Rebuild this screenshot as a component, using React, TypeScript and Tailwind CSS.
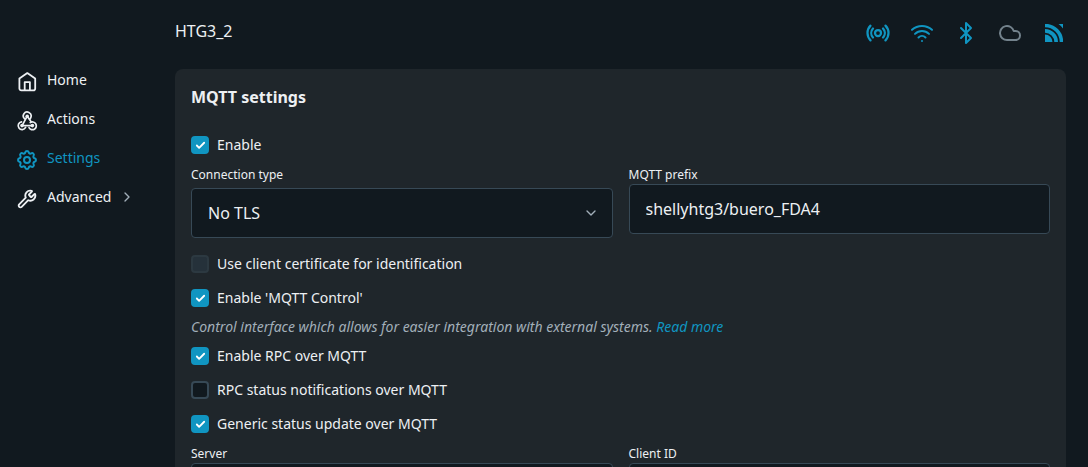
import type { ReactNode } from "react";
import { Bluetooth, Check, ChevronDown, ChevronRight, Cloud, Wifi, Wrench } from "lucide-react";
import { PiBroadcastBold } from "react-icons/pi";
import { TbSettings } from "react-icons/tb";

function HomeIcon() {
  return (
    <svg viewBox="0 0 20 20" className="size-5 shrink-0" fill="none" stroke="currentColor" strokeWidth="1.8" strokeLinejoin="round" strokeLinecap="round" aria-hidden="true">
      <path d="M2.400 6.600 10.300 1.100l7.900 5.500v9.800a1.900 1.900 0 0 1-1.900 1.900H4.300a1.900 1.900 0 0 1-1.900-1.900Z" />
      <path d="M7.700 18v-7.900h5.200V18" />
    </svg>
  );
}

function WebhookIcon() {
  return (
    <svg viewBox="0 0 22 22" className="size-[22px] shrink-0" fill="none" stroke="currentColor" strokeWidth="1.7" strokeLinejoin="round" strokeLinecap="round" aria-hidden="true">
      <path d="M11.200 6.200 6.400 15.100" />
      <path d="M6.100 15.600H16.400" />
      <path d="M11.200 6.200 15.300 12" />
      <path d="M8.700 8.900A3.900 3.900 0 1 1 14.900 7.200C14.700 8 14.300 8.700 13.800 9.200" />
      <path d="M5.500 11.800A3.900 3.900 0 1 0 9.600 17.400" />
      <path d="M14.200 12.600A3.900 3.900 0 1 1 13 17.700" />
      <g fill="currentColor" stroke="none">
        <circle cx="11.200" cy="6.200" r="1.800" />
        <circle cx="6" cy="15.600" r="1.800" />
        <circle cx="16.400" cy="15.600" r="1.800" />
      </g>
    </svg>
  );
}

function RssIcon() {
  return (
    <svg viewBox="0 0 18 18" className="size-[18px]" fill="currentColor" role="img" aria-label="Connection">
      <path d="M0 10.500A7.500 7.500 0 0 1 7.500 18H0Z" />
      <path d="M0 5A13 13 0 0 1 13 18H9.300A9.300 9.300 0 0 0 0 8.700Z" />
      <path d="M0 0H3A18 18 0 0 1 18 15V18H14.700A14.700 14.700 0 0 0 0 3.300Z" />
      <path d="M13.500 0H18V4.500a19 19 0 0 0-4.500-4.500Z" />
    </svg>
  );
}

type NavItemProps = { label: string; icon: ReactNode; active?: boolean; expandable?: boolean };

function NavItem({ label, icon, active, expandable }: NavItemProps) {
  return (
    <li>
      <a
        href={"#" + label.toLowerCase()}
        aria-current={active ? "page" : undefined}
        className={active ? "flex h-[39px] items-center gap-2.5 text-[#1095c1]" : "flex h-[39px] items-center gap-2.5 text-[#edf0f3]"}
      >
        <span className="mt-1 flex w-5 shrink-0 justify-center">{icon}</span>
        <span>{label}</span>
        {expandable && <ChevronRight size={16} strokeWidth={2} className="-ml-0.5 text-[#a2afb9]" />}
      </a>
    </li>
  );
}

function Checkbox({ label, checked, disabled }: { label: string; checked?: boolean; disabled?: boolean }) {
  return (
    <label className="flex h-5 items-center gap-2 text-[#edf0f3]">
      <span className="grid size-[18px] shrink-0 place-items-center">
        <input
          type="checkbox"
          defaultChecked={checked}
          disabled={disabled}
          className="peer col-start-1 row-start-1 size-[18px] appearance-none rounded-[4px] border-2 border-[#374956] bg-[#11191f] checked:border-[#1095c1] checked:bg-[#1095c1] disabled:border-[#2c3941] disabled:bg-[#25313a]"
        />
        <Check size={11} strokeWidth={4} className="pointer-events-none invisible col-start-1 row-start-1 text-white peer-checked:visible" />
      </span>
      {label}
    </label>
  );
}

const fieldClass = "h-[50px] w-full rounded-[4px] border border-[#374956] bg-[#11191f] px-4 text-base text-[#edf0f3]";

function TextField({ id, label, value }: { id: string; label: string; value: string }) {
  return (
    <div className="min-w-0">
      <label htmlFor={id} className="block h-5 text-xs leading-[22px] text-[#edf0f3]">{label}</label>
      <input id={id} type="text" defaultValue={value} className={fieldClass} />
    </div>
  );
}

export default function App() {
  return (
    <div className="flex h-screen overflow-hidden bg-[#11191f] font-['Noto_Sans',sans-serif] text-sm text-[#edf0f3]">
      <nav aria-label="Main" className="w-[175px] shrink-0 pt-[60px] pl-[17px]">
        <ul>
          <NavItem label="Home" icon={<HomeIcon />} />
          <NavItem label="Actions" icon={<WebhookIcon />} />
          <NavItem label="Settings" icon={<TbSettings size={24} className="shrink-0" />} active />
          <NavItem label="Advanced" icon={<Wrench size={20} strokeWidth={2.2} />} expandable />
        </ul>
      </nav>
      <main className="min-w-0 flex-1 pr-[22px]">
        <header className="flex h-[69px] items-center justify-between pb-1">
          <h1 className="pb-1 text-base">HTG3_2</h1>
          <div className="flex items-center gap-5 text-[#1095c1]">
            <PiBroadcastBold size={24} role="img" aria-label="Access point" />
            <Wifi size={24} role="img" aria-label="Wi-Fi" />
            <Bluetooth size={24} role="img" aria-label="Bluetooth" />
            <Cloud size={24} className="text-[#73828c]" role="img" aria-label="Cloud" />
            <span className="flex w-6 justify-center"><RssIcon /></span>
          </div>
        </header>
        <section className="rounded-lg bg-[#1f262b] px-4 pt-4 pb-4">
          <h2 className="mb-[26px] text-base leading-6 font-bold">MQTT settings</h2>
          <Checkbox label="Enable" checked />
          <div className="mt-[9px] grid grid-cols-2 gap-4">
            <div className="min-w-0">
              <label htmlFor="connection" className="block h-6 text-xs leading-[22px] text-[#edf0f3]">Connection type</label>
              <div className="grid items-center">
                <select id="connection" className={"col-start-1 row-start-1 appearance-none " + fieldClass}>
                  <option>No TLS</option>
                </select>
                <ChevronDown size={16} className="pointer-events-none col-start-1 row-start-1 mr-3.5 justify-self-end text-[#a2afb9]" />
              </div>
            </div>
            <TextField id="prefix" label="MQTT prefix" value="shellyhtg3/buero_FDA4" />
          </div>
          <div className="mt-4 flex flex-col gap-3.5">
            <Checkbox label="Use client certificate for identification" disabled />
            <Checkbox label="Enable 'MQTT Control'" checked />
          </div>
          <p className="my-[7px] leading-6 text-[#a2afb9] italic">
            Control interface which allows for easier integration with external systems.{" "}
            <a href="#read-more" className="text-[#1095c1]">Read more</a>
          </p>
          <div className="flex flex-col gap-3.5">
            <Checkbox label="Enable RPC over MQTT" checked />
            <Checkbox label="RPC status notifications over MQTT" />
            <Checkbox label="Generic status update over MQTT" checked />
          </div>
          <div className="mt-[9px] grid grid-cols-2 gap-4">
            <TextField id="server" label="Server" value="" />
            <TextField id="client" label="Client ID" value="" />
          </div>
        </section>
      </main>
    </div>
  );
}
